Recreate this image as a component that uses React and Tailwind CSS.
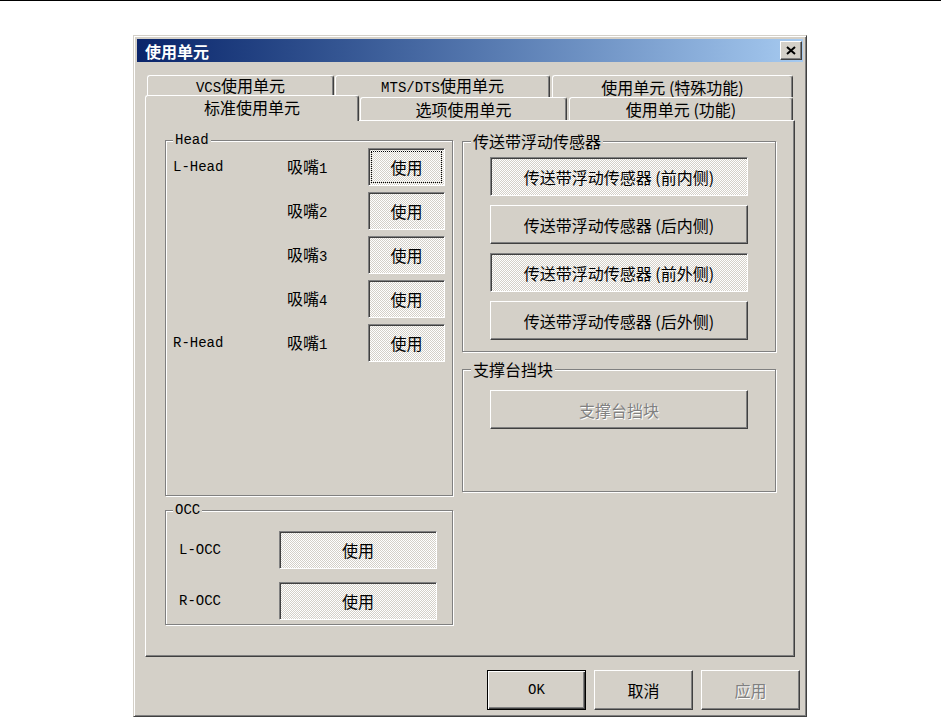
import React from 'react';

const CJK = "font-['Noto_Sans_CJK_SC',sans-serif] text-[16px]";
const MONO = "font-['Liberation_Mono','Noto_Sans_CJK_SC',monospace] text-[14px]";

const M = ({ children }) => <span className={MONO}>{children}</span>;

const raised =
  'border border-t-white border-l-white border-r-[#404040] border-b-[#404040] shadow-[inset_-1px_-1px_0_#808080] bg-[#d4d0c8]';
const pushed =
  'border border-t-[#808080] border-l-[#808080] border-r-white border-b-white shadow-[inset_1px_1px_0_#404040] bg-[repeating-conic-gradient(#ffffff_0_25%,#d4d0c8_0_50%)] bg-size-[2px_2px]';
const disabledText = 'text-[#808080] [text-shadow:1px_1px_0_#ffffff]';

const Btn = ({ on, focus, disabled, className = '', children }) => (
  <div
    className={`flex items-center justify-center shrink-0 ${on ? pushed : raised} ${
      disabled ? disabledText : 'text-black'
    } ${className}`}
  >
    {focus ? (
      <span className="self-stretch flex-1 m-[2px] border border-dotted border-black flex items-center justify-center">
        {children}
      </span>
    ) : (
      <span>{children}</span>
    )}
  </div>
);

const Group = ({ label, mono, className = '', children }) => (
  <div
    className={`flex flex-col border border-[#808080] shadow-[inset_1px_1px_0_#ffffff,1px_1px_0_#ffffff] ${className}`}
  >
    <span
      className={`self-start bg-[#d4d0c8] px-[2px] ${
        mono ? `${MONO} leading-[16px] -mt-[9px] ml-[7px]` : `${CJK} leading-[18px] -mt-[10px] ml-[8px]`
      }`}
    >
      {label}
    </span>
    {children}
  </div>
);

const Tab = ({ className = '', children }) => (
  <div
    className={`flex items-center justify-center shrink-0 bg-[#d4d0c8] rounded-t-[3px] border-t border-l border-r border-t-white border-l-white border-r-[#404040] shadow-[inset_-1px_0_0_#808080] ${className}`}
  >
    <span className="leading-[18px]">{children}</span>
  </div>
);

const heads = [
  { side: 'L-Head', n: '1', focus: true },
  { side: '', n: '2' },
  { side: '', n: '3' },
  { side: '', n: '4' },
  { side: 'R-Head', n: '1' },
];

const sensors = [
  { label: '前内侧', on: true },
  { label: '后内侧', on: false },
  { label: '前外侧', on: true },
  { label: '后外侧', on: false },
];

export default function App() {
  return (
    <div className={`w-[941px] h-[717px] bg-white border-t border-black overflow-hidden ${CJK}`}>
      <div className="ml-[133px] mt-[34px] w-[674px] h-[682px] bg-[#d4d0c8] p-[3px] border border-t-[#d4d0c8] border-l-[#d4d0c8] border-r-[#404040] border-b-[#404040] shadow-[inset_1px_1px_0_#ffffff,inset_-1px_-1px_0_#808080] flex flex-col">
        {/* title bar */}
        <div className="h-[23px] shrink-0 flex items-center justify-between pl-[8px] pr-[1px] bg-linear-to-r from-[#0a246a] to-[#a6caf0]">
          <span className="text-white font-bold leading-[20px]">使用单元</span>
          <div className={`w-[22px] h-[19px] flex items-center justify-center ${raised}`}>
            <svg width="10" height="9" viewBox="0 0 10 9">
              <path d="M1 1 L9 8 M9 1 L1 8" stroke="#000" strokeWidth="2" fill="none" />
            </svg>
          </div>
        </div>

        {/* tabs */}
        <div className="ml-[8px] mt-[13px] w-[650px] flex flex-col">
          <div className="h-[22px] flex pl-[2px]">
            <Tab className="w-[187px] h-[22px]">
              <M>VCS</M>使用单元
            </Tab>
            <Tab className="w-[215px] h-[22px] ml-[1px]">
              <M>MTS/DTS</M>使用单元
            </Tab>
            <Tab className="w-[241px] h-[22px] ml-[2px]">使用单元 (特殊功能)</Tab>
          </div>
          <div className="h-[25px] -mt-[2px] flex items-end">
            <Tab className="w-[214px] h-[26px] -mb-px relative z-10 pb-[3px]">标准使用单元</Tab>
            <Tab className="w-[207px] h-[23px] ml-[1px]">选项使用单元</Tab>
            <Tab className="w-[224px] h-[23px] ml-[2px]">使用单元 (功能)</Tab>
          </div>

          {/* panel */}
          <div className="h-[537px] bg-[#d4d0c8] border border-t-white border-l-white border-r-[#404040] border-b-[#404040] shadow-[inset_-1px_-1px_0_#808080] flex gap-[9px] pl-[19px] pt-[19px]">
            <div className="w-[288px] flex flex-col gap-[14px]">
              <Group label="Head" mono className="h-[356px]">
                <div className="flex flex-col gap-[6px] pl-[7px]">
                  {heads.map((h, i) => (
                    <div key={i} className="flex items-center h-[38px]">
                      <span className={`w-[114px] ${MONO}`}>{h.side}</span>
                      <span className="w-[81px]">
                        吸嘴<M>{h.n}</M>
                      </span>
                      <Btn on focus={h.focus} className="w-[77px] h-[38px]">
                        使用
                      </Btn>
                    </div>
                  ))}
                </div>
              </Group>
              <Group label="OCC" mono className="h-[115px]">
                <div className="flex flex-col gap-[13px] pl-[13px] mt-[13px]">
                  {['L-OCC', 'R-OCC'].map((s) => (
                    <div key={s} className="flex items-center h-[38px]">
                      <span className={`w-[100px] ${MONO}`}>{s}</span>
                      <Btn on className="w-[158px] h-[38px]">
                        使用
                      </Btn>
                    </div>
                  ))}
                </div>
              </Group>
            </div>

            <div className="w-[314px] flex flex-col mt-[1px]">
              <Group label="传送带浮动传感器" className="h-[211px]">
                <div className="flex flex-col gap-[9px] px-[27px] mt-[7px]">
                  {sensors.map((s) => (
                    <Btn key={s.label} on={s.on} className="h-[39px]">
                      传送带浮动传感器 ({s.label})
                    </Btn>
                  ))}
                </div>
              </Group>
              <Group label="支撑台挡块" className="h-[123px] mt-[17px]">
                <div className="flex flex-col px-[27px] mt-[12px]">
                  <Btn disabled className="h-[39px]">
                    支撑台挡块
                  </Btn>
                </div>
              </Group>
            </div>
          </div>
        </div>

        {/* dialog buttons */}
        <div className="flex justify-end gap-[8px] pr-[3px] mt-[13px]">
          <div className="w-[99px] h-[40px] flex items-center justify-center border border-black shadow-[inset_1px_1px_0_#ffffff,inset_-1px_-1px_0_#404040,inset_-2px_-2px_0_#808080]">
            <M>OK</M>
          </div>
          <Btn className="w-[99px] h-[40px]">取消</Btn>
          <Btn disabled className="w-[99px] h-[40px]">
            应用
          </Btn>
        </div>
      </div>
    </div>
  );
}
